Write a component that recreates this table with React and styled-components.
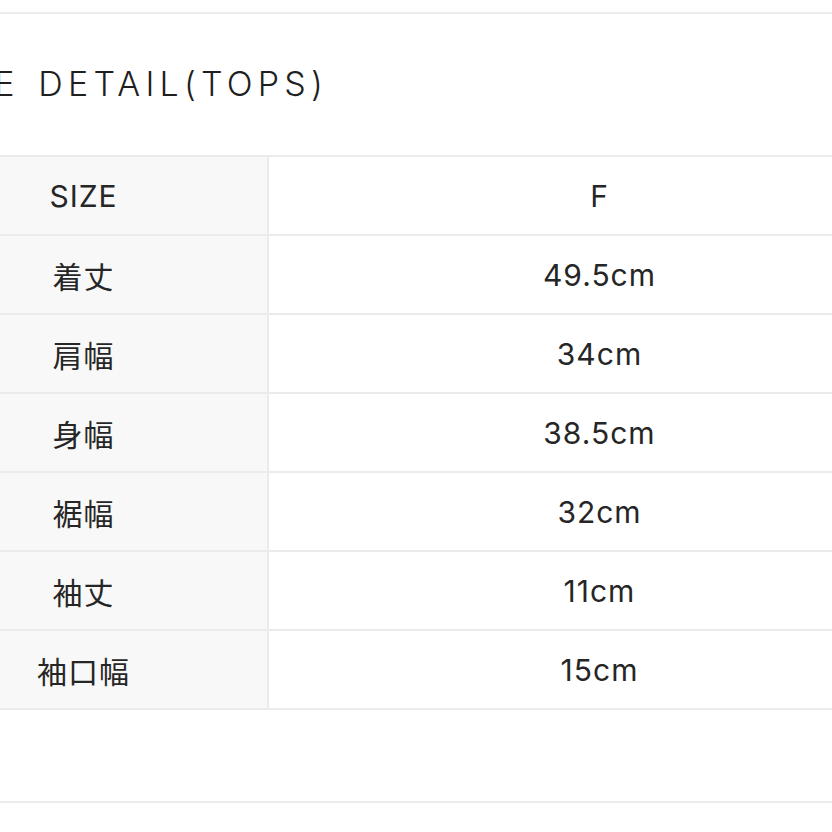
import React from "react";
import styled, { createGlobalStyle } from "styled-components";

const Global = createGlobalStyle`
  html, body { margin: 0; padding: 0; background: #ffffff; }
  body { overflow: hidden; }
`;

const Page = styled.div`
  width: 832px;
  height: 832px;
  overflow: hidden;
  background: #fff;
  font-family: "Inter", "Noto Sans CJK JP", sans-serif;
  color: #262626;
`;

const Sheet = styled.div`
  margin-left: -100px;
  width: 1030px;
  padding-top: 12px;
`;

const Rule = styled.div`
  height: 2px;
  background: #ececec;
`;

const TitleBar = styled.div`
  height: 141px;
  display: flex;
  align-items: center;
  padding-left: ${(p) => p.$indent}px;
  padding-bottom: 2px;
  box-sizing: border-box;
`;

const Title = styled.h2`
  margin: 0;
  font-family: "Inter", sans-serif;
  font-weight: 300;
  font-size: 34px;
  letter-spacing: 5.2px;
  word-spacing: 4px;
  color: #1f1f1f;
  line-height: 1;
  white-space: nowrap;
`;

const Table = styled.table`
  width: 100%;
  border-collapse: collapse;
  border-top: 2px solid #ebebeb;
  table-layout: fixed;
`;

const Cell = styled.td`
  height: 79px;
  padding: 0;
  box-sizing: border-box;
  border-bottom: 2px solid #ebebeb;
  text-align: center;
  vertical-align: middle;
  font-size: 30px;
  letter-spacing: 1px;
  font-weight: 400;
  color: #262626;
  background: ${(p) => (p.$head ? "#f8f8f8" : "#ffffff")};
  border-right: ${(p) => (p.$head ? "2px solid #ebebeb" : "none")};
  width: ${(p) => (p.$head ? "368px" : "auto")};
`;

const Spacer = styled.div`
  height: 91px;
`;

const rows = [
  ["SIZE", "F"],
  ["着丈", "49.5cm"],
  ["肩幅", "34cm"],
  ["身幅", "38.5cm"],
  ["裾幅", "32cm"],
  ["袖丈", "11cm"],
  ["袖口幅", "15cm"],
];

export default function App() {
  return (
    <Page>
      <Global />
      <Sheet>
        <Rule />
        <TitleBar $indent={27}>
          <Title>SIZE DETAIL(TOPS)</Title>
        </TitleBar>
        <Table>
          <tbody>
            {rows.map(([k, v]) => (
              <tr key={k}>
                <Cell $head>{k}</Cell>
                <Cell>{v}</Cell>
              </tr>
            ))}
          </tbody>
        </Table>
        <Spacer />
        <Rule />
      </Sheet>
    </Page>
  );
}
